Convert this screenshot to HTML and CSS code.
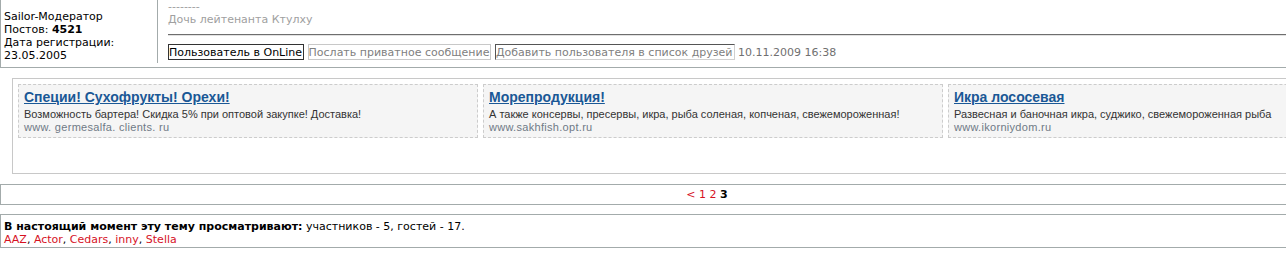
FILE: index.html
```html
<!DOCTYPE html>
<html lang="ru">
<head>
    <meta charset="UTF-8">
    <title>Форум</title>
    <link rel="stylesheet" href="styles.css">
</head>
<body>
    <div class="page">
        <!-- Post footer row -->
        <div class="post">
            <div class="post-author">
                Sailor-Модератор<br>
                Постов: <b>4521</b><br>
                Дата регистрации:<br>
                23.05.2005
            </div>
            <div class="post-body">
                <div class="signature">--------<br>Дочь лейтенанта Ктулху</div>
                <div class="post-rule"></div>
                <div class="post-tools">
                    <span class="tool tool-online">Пользователь в OnLine</span>
                    <span class="tool">Послать приватное сообщение</span>
                    <span class="tool tool-hover">Добавить пользователя в список друзей</span>
                    <span class="post-date">10.11.2009 16:38</span>
                </div>
            </div>
        </div>

        <!-- Ad block -->
        <div class="ads">
            <div class="ads-row">
                <div class="ad">
                    <a class="ad-title" href="#">Специи! Сухофрукты! Орехи!</a>
                    <div class="ad-text">Возможность бартера! Скидка 5% при оптовой закупке! Доставка!</div>
                    <div class="ad-url">www. germesalfa. clients. ru</div>
                </div>
                <div class="ad">
                    <a class="ad-title" href="#">Морепродукция!</a>
                    <div class="ad-text">А также консервы, пресервы, икра, рыба соленая, копченая, свежемороженная!</div>
                    <div class="ad-url">www.sakhfish.opt.ru</div>
                </div>
                <div class="ad">
                    <a class="ad-title" href="#">Икра лососевая</a>
                    <div class="ad-text">Развесная и баночная икра, суджико, свежемороженная рыба</div>
                    <div class="ad-url">www.ikorniydom.ru</div>
                </div>
            </div>
        </div>

        <!-- Pages -->
        <div class="pages">
            <a href="#">&lt;</a> <a href="#">1</a> <a href="#">2</a> <b>3</b>
        </div>

        <!-- Who is viewing -->
        <div class="viewers">
            <b>В настоящий момент эту тему просматривают:</b> участников - 5, гостей - 17.<br>
            <a href="#">AAZ</a>, <a href="#">Actor</a>, <a href="#">Cedars</a>, <a href="#">inny</a>, <a href="#">Stella</a>
        </div>
    </div>
</body>
</html>
```

FILE: styles.css
```css
html {
    overflow: hidden;
}
body {
    margin: 0;
    font-family: "DejaVu Sans", Verdana, sans-serif;
    font-size: 11px;
    line-height: 13px;
    color: #000;
    background: #fff;
}
a {
    color: #d6121f;
    text-decoration: none;
}
.page {
    width: 1413px;
}
.post {
    display: flex;
    border-left: 1px solid #a3abab;
    border-bottom: 1px solid #a3abab;
    padding-bottom: 4px;
}
.post-author {
    width: 153px;
    flex-shrink: 0;
    padding: 10px 0 1px 3px;
    border-right: 1px solid #a3abab;
}
.post-body {
    flex: 1;
    padding: 0 0 0 10px;
}
.signature {
    color: #a0a0a0;
}
.post-rule {
    margin-top: 8px;
    border-top: 1px solid #6e6e6e;
    border-bottom: 1px solid #e2e2e2;
}
.post-tools {
    margin-top: 8px;
    color: #808080;
}
.tool {
    display: inline-block;
    border: 1px solid #c8c8c8;
    padding: 1px 1px 0 0;
    line-height: 13px;
}
.tool-online {
    color: #000;
    border-color: #333;
}
.tool-hover {
    border-color: #555 #d0d0d0 #d0d0d0 #555;
}
.post-date {
    color: #707070;
}
.ads {
    margin: 10px 0 10px 12px;
    border: 1px solid #c8c8c8;
    border-right: none;
    padding: 5px;
    height: 84px;
    overflow: hidden;
    font-family: "Liberation Sans", Arial, sans-serif;
}
.ads-row {
    display: grid;
    grid-template-columns: 460px 460px 460px;
    gap: 5px;
}
.ad {
    border: 1px dashed #cccccc;
    background: #f5f5f5;
    padding: 4px 5px 3px 5px;
}
.ad-title {
    display: block;
    color: #1a5896;
    font-size: 14px;
    font-weight: bold;
    line-height: 17px;
    text-decoration: underline;
    margin-bottom: 2px;
}
.ad-text {
    color: #333;
    font-size: 11px;
    line-height: 13px;
}
.ad-url {
    color: #6f7a86;
    font-size: 11px;
    line-height: 13px;
    letter-spacing: 0.3px;
}
.pages {
    border: 1px solid #a3abab;
    border-right: none;
    padding: 3px 0;
    text-align: center;
}
.viewers {
    margin-top: 9px;
    border: 1px solid #a3abab;
    border-right: none;
    padding: 5px 0 1px 3px;
}
```
